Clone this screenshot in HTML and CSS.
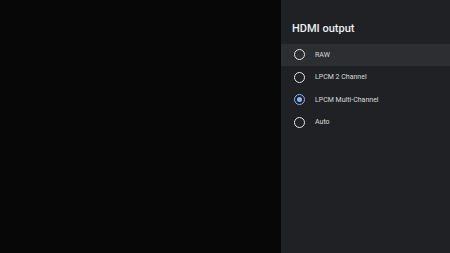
FILE: index.html
```html
<!DOCTYPE html>
<html lang="en">
<head>
    <meta charset="UTF-8">
    <title>HDMI output</title>
    <link rel="stylesheet" href="styles.css">
</head>
<body>
    <div class="screen">
        <div class="backdrop"></div>
        <div class="panel">
            <h1 class="panel-title">HDMI output</h1>
            <ul class="options">
                <li class="option focused"><span class="radio"></span><span class="label">RAW</span></li>
                <li class="option"><span class="radio"></span><span class="label">LPCM 2 Channel</span></li>
                <li class="option"><span class="radio checked"></span><span class="label">LPCM Multi-Channel</span></li>
                <li class="option"><span class="radio"></span><span class="label">Auto</span></li>
            </ul>
        </div>
    </div>
</body>
</html>
```
FILE: styles.css
```css
* {
    margin: 0;
    padding: 0;
    box-sizing: border-box;
    font-family: Roboto, 'Liberation Sans', sans-serif;
}

body {
    background-color: #070707;
    width: 450px;
    height: 253px;
    overflow: hidden;
}

.screen {
    display: flex;
    height: 253px;
}

.backdrop {
    flex: 1;
    background-color: #070707;
}

.panel {
    width: 169px;
    background-color: #202124;
    padding-top: 22px;
}

.panel-title {
    font-size: 11px;
    font-weight: 500;
    color: #eceef0;
    padding-left: 11px;
    line-height: 14px;
    margin-bottom: 7.5px;
}

.options {
    list-style: none;
}

.option {
    display: flex;
    align-items: center;
    height: 22.5px;
    padding-left: 13px;
}

.option.focused {
    background-color: #2d2e31;
}

.radio {
    width: 11px;
    height: 11px;
    border: 1.5px solid #e4e6e8;
    border-radius: 50%;
    margin-right: 10px;
    position: relative;
}

.radio.checked {
    border-color: #8ab4f8;
}

.radio.checked::after {
    content: '';
    position: absolute;
    left: 1.5px;
    top: 1.5px;
    width: 5px;
    height: 5px;
    border-radius: 50%;
    background-color: #8ab4f8;
}

.label {
    font-size: 7px;
    color: #d8dadd;
}
```
